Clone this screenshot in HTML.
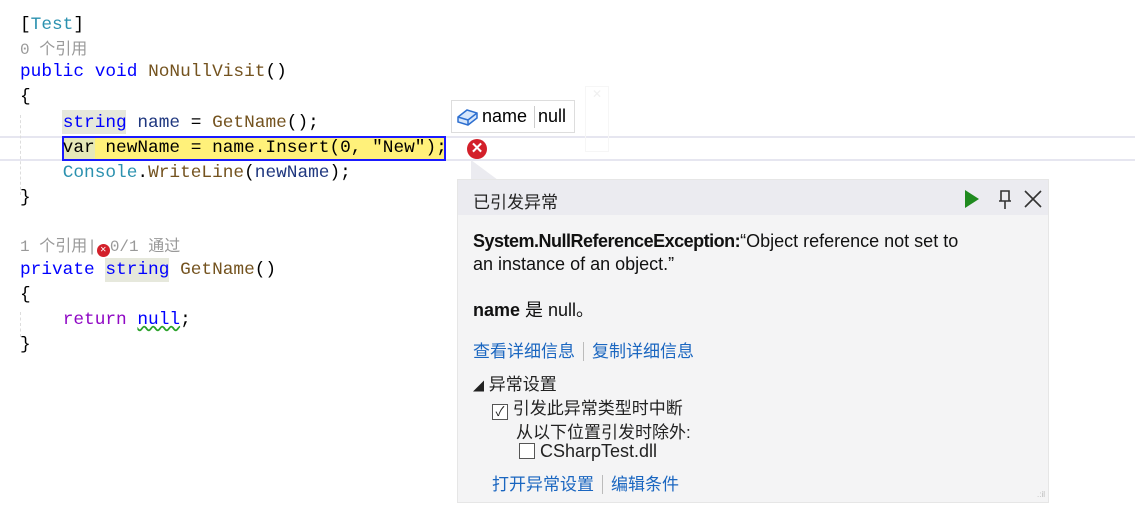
<!DOCTYPE html><html><head><style>
body{margin:0;width:1135px;height:510px;background:#fff;position:relative;overflow:hidden;font-family:"Liberation Sans","Noto Sans CJK SC",sans-serif}
.code{position:absolute;left:20px;font-family:"Liberation Mono","Noto Sans CJK SC",monospace;font-size:17.8px;white-space:pre;color:#000;line-height:24px}
.kw{color:#0000ff}.ty{color:#2b91af}.fn{color:#74531f}.st{color:#a31515}.pu{color:#8f08c4}.pa{color:#1f377f}
.ab{position:absolute}
a{color:#1a66c0;text-decoration:none}
</style></head><body>
<div class="ab" style="left:0;top:136px;width:1135px;height:25px;border-top:2px solid #e6e6f0;border-bottom:2px solid #e6e6f0;box-sizing:border-box"></div>
<div class="ab" style="left:62px;top:110px;width:64px;height:24px;background:#e6e8dc"></div>
<div class="ab" style="left:105px;top:258px;width:64px;height:24px;background:#e6e8dc"></div>
<div class="ab" style="left:62px;top:136px;width:384px;height:25px;background:#fff17a;border:2px solid #1a1aff;box-sizing:border-box"></div>
<div class="ab" style="left:64px;top:138px;width:31px;height:21px;background:#e6e8b8"></div>
<div class="ab" style="left:20px;top:115px;height:80px;border-left:1px dashed #ddd"></div>
<div class="ab" style="left:20px;top:312px;height:25px;border-left:1px dashed #ddd"></div>
<div class="code" style="top:13px">[<span class="ty">Test</span>]</div>
<div class="code" style="top:38px;font-size:16px;color:#999">0 个引用</div>
<div class="code" style="top:60px"><span class="kw">public void</span> <span class="fn">NoNullVisit</span>()</div>
<div class="code" style="top:85px">{</div>
<div class="code" style="top:111px">    <span class="kw">string</span> <span class="pa">name</span> = <span class="fn">GetName</span>();</div>
<div class="code" style="top:136px">    var newName = name.Insert(0, "New");</div>
<div class="code" style="top:161px">    <span class="ty">Console</span>.<span class="fn">WriteLine</span>(<span class="pa">newName</span>);</div>
<div class="code" style="top:186px">}</div>
<div class="code" style="top:235px;font-size:16px;color:#999">1 个引用|<span style="display:inline-block;width:13px;height:13px;border-radius:50%;background:#d3202a;color:#fff;font-size:10px;line-height:13px;text-align:center;vertical-align:-1px">✕</span>0/1 通过</div>
<div class="code" style="top:258px"><span class="kw">private string</span> <span class="fn">GetName</span>()</div>
<div class="code" style="top:283px">{</div>
<div class="code" style="top:308px">    <span class="pu">return</span> <span class="kw" style="text-decoration:underline wavy #2aa12a">null</span>;</div>
<div class="code" style="top:333px">}</div>
<div class="ab" style="left:451px;top:100px;width:124px;height:33px;background:#fff;border:1px solid #ddd;box-sizing:border-box;font-size:18px;line-height:31px">
<svg class="ab" style="left:4px;top:6px" width="24" height="20" viewBox="0 0 24 20"><path d="M2 10 L11 3 L21 6 L21 11 L12 18 L2 15 Z" fill="#d6e6fb" stroke="#2d6fd0" stroke-width="1.5"/><path d="M2 10 L12 13 L21 6 M12 13 L12 18" fill="none" stroke="#2d6fd0" stroke-width="1.5"/></svg>
<span class="ab" style="left:30px">name</span><span class="ab" style="left:82px;top:5px;height:22px;border-left:1px solid #ccc"></span><span class="ab" style="left:86px">null</span></div>
<div class="ab" style="left:585px;top:86px;width:22px;height:64px;border:1px solid #f6f6f6;color:#f0f0f0;font-size:12px;text-align:center">✕</div>
<div class="ab" style="left:467px;top:139px;width:20px;height:20px;border-radius:50%;background:#d3202a;color:#fff;font-size:15px;font-weight:bold;line-height:20px;text-align:center">✕</div>
<svg class="ab" style="left:470px;top:160px" width="30" height="20"><path d="M1 0 L1 20 L28 20 Z" fill="#ebebf0"/></svg>
<div class="ab" style="left:457px;top:179px;width:592px;height:324px;background:#f4f4f5;border:1px solid #e6e6e6;box-sizing:border-box">
<div class="ab" style="left:0;top:0;width:590px;height:35px;background:#ebebf0"></div>
<div class="ab" style="left:15px;top:8px;font-size:17px;color:#222">已引发异常</div>
<svg class="ab" style="left:505px;top:9px" width="80" height="20"><path d="M2 1 L16 10 L2 19 Z" fill="#1f8a1f"/><path d="M38 2 h8 v10 h-8 Z M42 12 v8 M36 12 h12" fill="none" stroke="#333" stroke-width="1.6"/><path d="M62 2 L78 18 M78 2 L62 18" stroke="#333" stroke-width="1.6"/></svg>
<div class="ab" style="left:15px;top:50px;width:495px;font-size:18px;line-height:23px;color:#111"><b style="letter-spacing:-0.5px">System.NullReferenceException:</b>“Object reference not set to an instance of an object.”</div>
<div class="ab" style="left:15px;top:116px;font-size:18px;color:#111"><b>name</b> 是 null。</div>
<div class="ab" style="left:15px;top:157px;font-size:17px"><a>查看详细信息</a><span style="border-left:1px solid #bbb;margin:0 8px"></span><a>复制详细信息</a></div>
<div class="ab" style="left:15px;top:190px;font-size:17px;color:#222"><span style="font-size:11px">◢</span> 异常设置</div>
<div class="ab" style="left:34px;top:214px;font-size:17px;color:#222"><span style="display:inline-block;width:14px;height:14px;border:1px solid #555;background:#fff;vertical-align:-2px;font-size:13px;line-height:14px;text-align:center">✓</span> 引发此异常类型时中断</div>
<div class="ab" style="left:58px;top:238px;font-size:17px;color:#222">从以下位置引发时除外:</div>
<div class="ab" style="left:61px;top:261px;font-size:18px;color:#222"><span style="display:inline-block;width:14px;height:14px;border:1px solid #555;background:#fff;vertical-align:-2px"></span> CSharpTest.dll</div>
<div class="ab" style="left:34px;top:290px;font-size:17px"><a>打开异常设置</a><span style="border-left:1px solid #bbb;margin:0 8px"></span><a>编辑条件</a></div>
<div class="ab" style="right:3px;bottom:3px;color:#bbb;font-size:8px">.:il</div>
</div>
</body></html>
